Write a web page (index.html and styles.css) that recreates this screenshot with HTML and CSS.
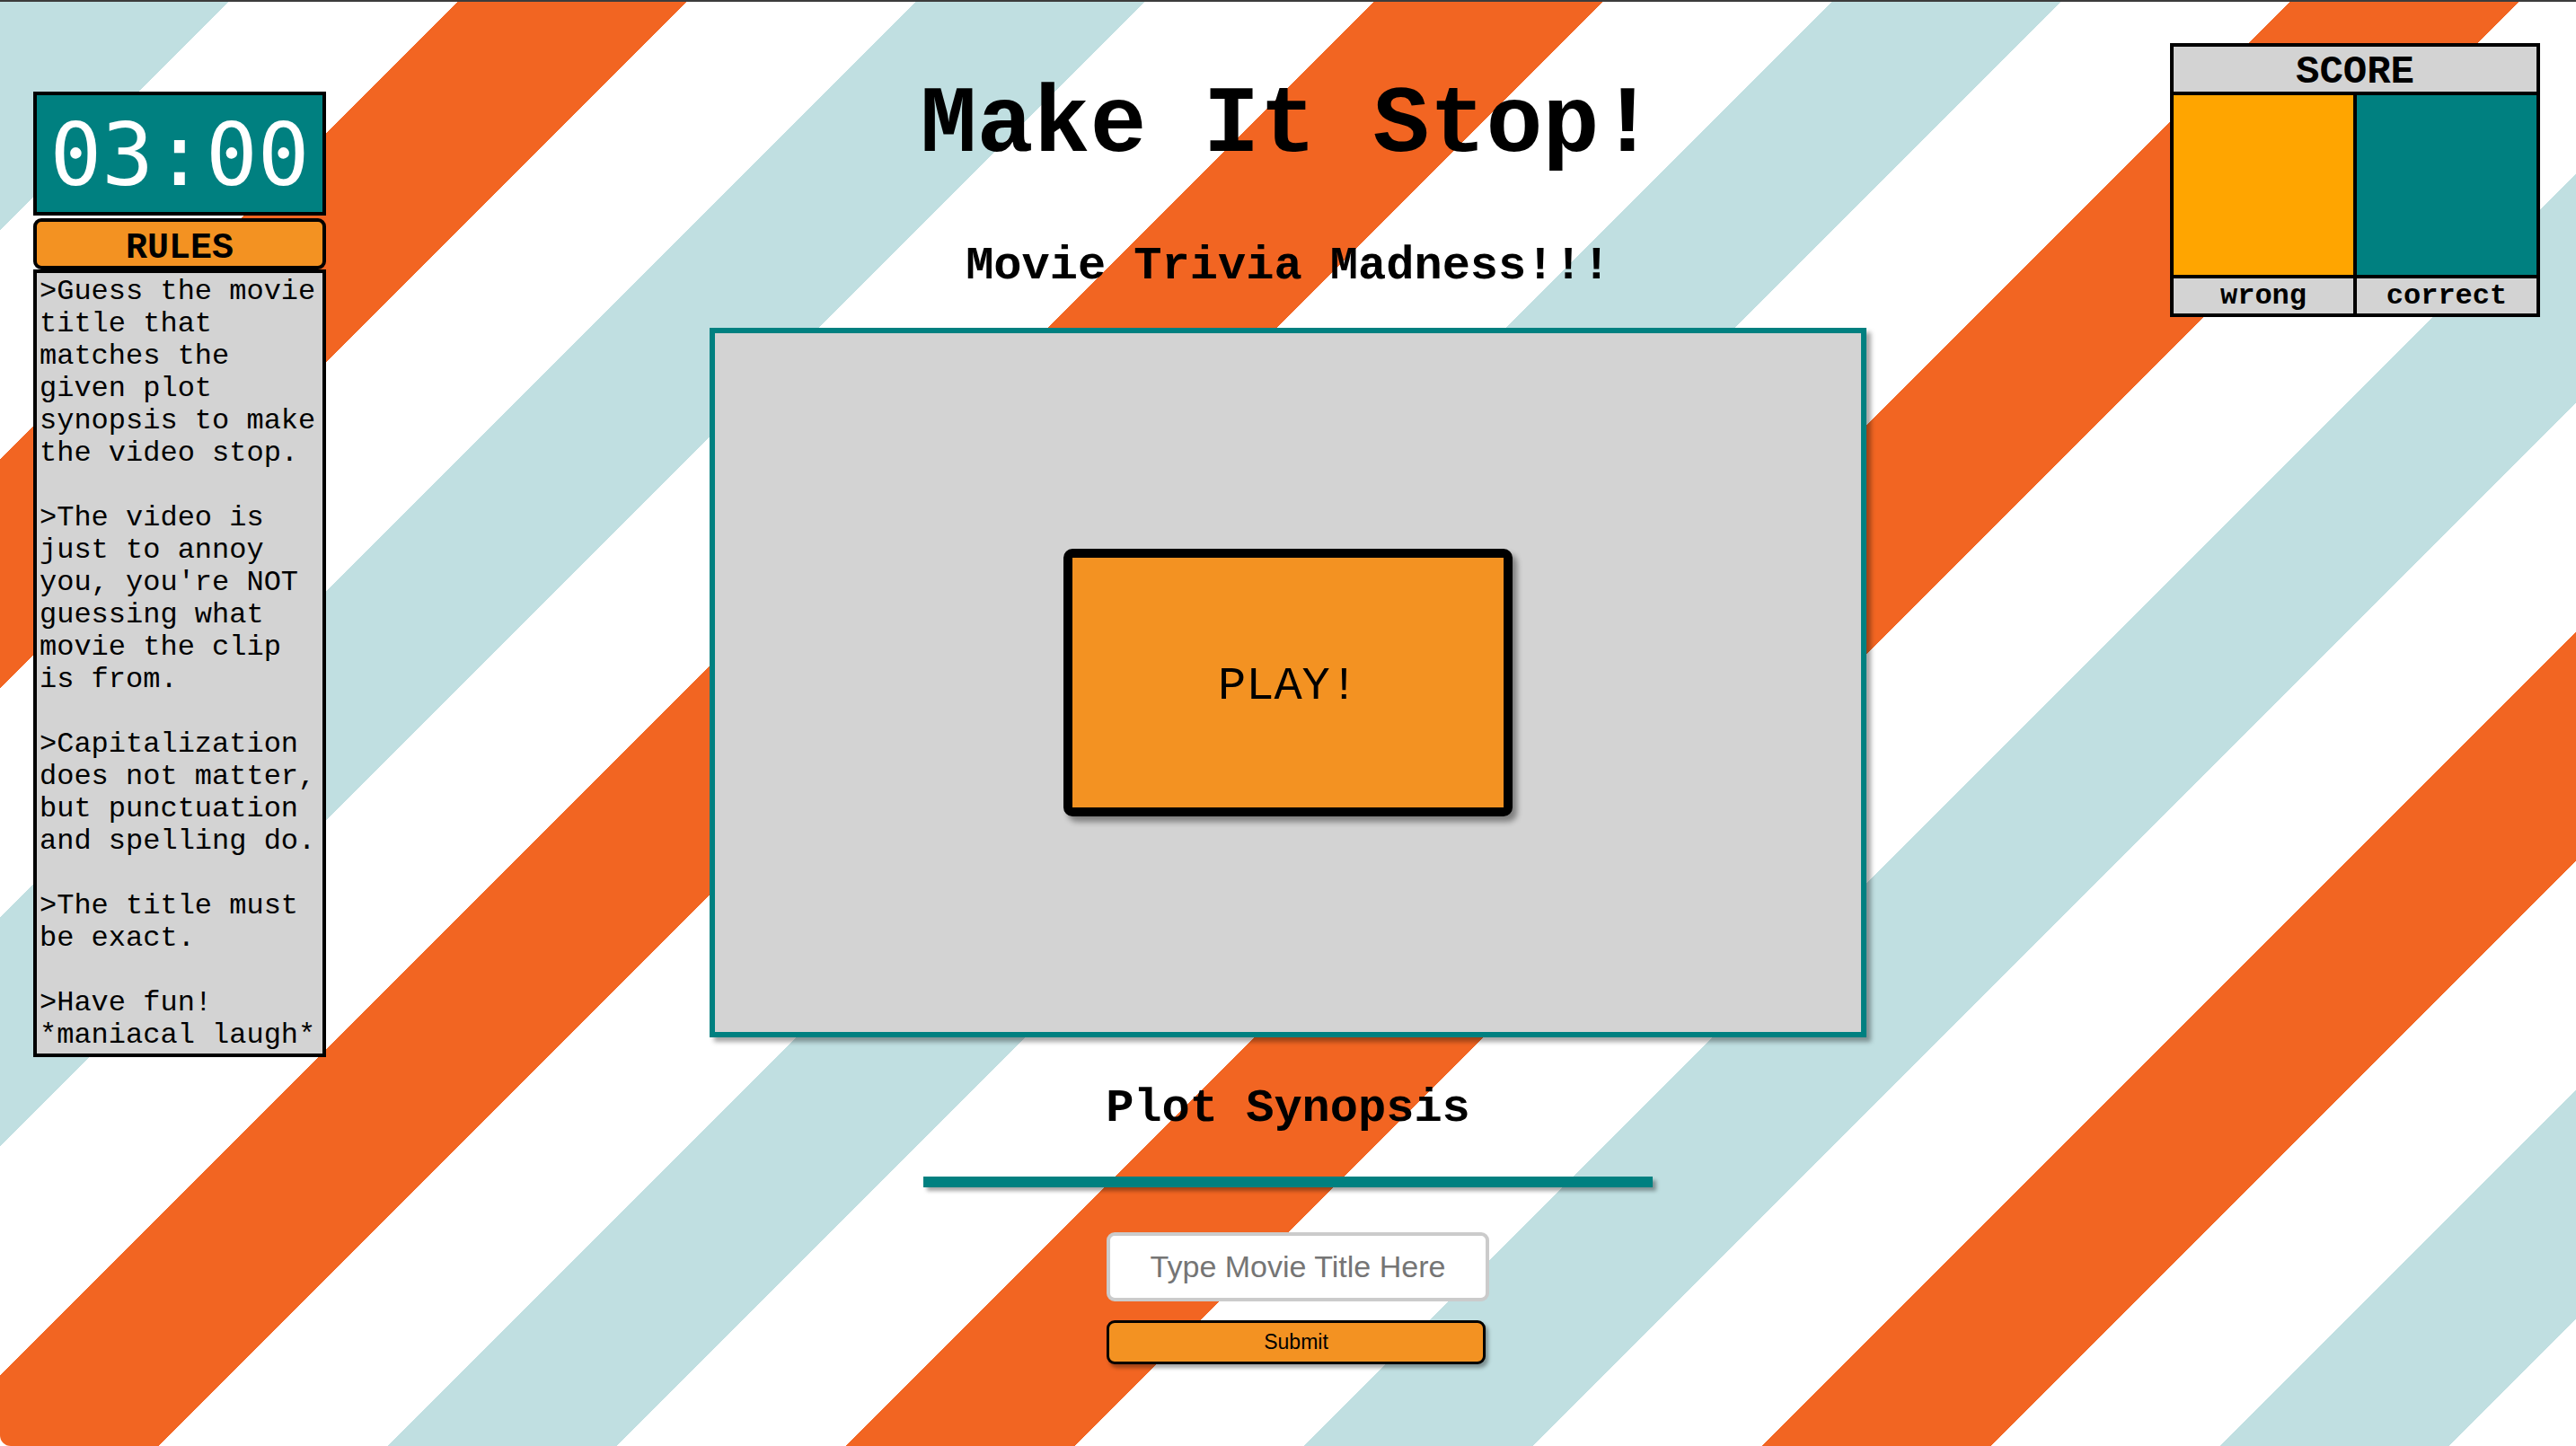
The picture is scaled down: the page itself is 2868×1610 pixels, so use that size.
FILE: index.html
```html
<!DOCTYPE html>
<html lang="en">
<head>
<meta charset="utf-8">
<title>Make It Stop!</title>
<link rel="stylesheet" href="styles.css">
</head>
<body>
<div class="page">
  <aside class="sidebar">
    <div class="timer">03:00</div>
    <div class="rules-head">RULES</div>
    <div class="rules-body">
      <p>&gt;Guess the movie title that matches the given plot synopsis to make the video stop.</p>
      <p>&gt;The video is just to annoy you, you're NOT guessing what movie the clip is from.</p>
      <p>&gt;Capitalization does not matter, but punctuation and spelling do.</p>
      <p>&gt;The title must be exact.</p>
      <p>&gt;Have fun! *maniacal laugh*</p>
    </div>
  </aside>

  <main class="main">
    <h1 class="title">Make It Stop!</h1>
    <h2 class="subtitle">Movie Trivia Madness!!!</h2>
    <div class="stage">
      <button class="play" type="button">PLAY!</button>
    </div>
    <h2 class="synopsis-title">Plot Synopsis</h2>
    <div class="synopsis"></div>
    <input class="answer" type="text" placeholder="Type Movie Title Here">
    <button class="submit" type="button">Submit</button>
  </main>

  <section class="score">
    <div class="score-head">SCORE</div>
    <div class="cell wrong"></div>
    <div class="cell correct"></div>
    <div class="label">wrong</div>
    <div class="label">correct</div>
  </section>
</div>
</body>
</html>
```

FILE: styles.css
```css
html {
  background: #ffffff;
}

body {
  margin: 0;
}

.page {
  box-sizing: border-box;
  min-height: 100vh;
  border-top: 2px solid #3c3c3c;
  border-radius: 0 0 12px 12px;
  background: repeating-linear-gradient(135deg,
    #c0dfe1 0px, #c0dfe1 180.3px,
    #ffffff 180.3px, #ffffff 360.6px,
    #f26522 360.6px, #f26522 540.9px,
    #ffffff 540.9px, #ffffff 721.2px);
  display: grid;
  grid-template-columns: 1fr auto 1fr;
  align-items: start;
  font-family: "Courier New", "Liberation Mono", monospace;
  color: #000;
}

/* ---------- left sidebar ---------- */
.sidebar {
  justify-self: start;
  width: 326px;
  margin: 100px 0 0 37px;
  display: flex;
  flex-direction: column;
}

.timer {
  box-sizing: border-box;
  height: 138px;
  border: 4px solid #000;
  background: #008080;
  color: #ffffff;
  font-family: "DejaVu Sans Mono", "Liberation Mono", monospace;
  font-size: 96px;
  line-height: 125px;
  padding-top: 5px;
  text-align: center;
}

.rules-head {
  box-sizing: border-box;
  height: 57px;
  margin-top: 3px;
  border: 4px solid #000;
  border-radius: 9px;
  background: #f39222;
  font-size: 40px;
  font-weight: bold;
  line-height: 45px;
  padding-top: 7px;
  text-align: center;
}

.rules-body {
  box-sizing: border-box;
  border: 4px solid #000;
  background: #d3d3d3;
  padding: 3px 0 2px 3px;
  font-size: 32px;
  line-height: 36px;
}

.rules-body p {
  margin: 0 0 36px;
}

.rules-body p:last-child {
  margin-bottom: 0;
}

/* ---------- center column ---------- */
.main {
  display: flex;
  flex-direction: column;
  align-items: center;
}

.title {
  margin: 79px 0 0;
  font-size: 105px;
  line-height: 120px;
  font-weight: bold;
}

.subtitle {
  margin: 66px 0 0;
  font-size: 52px;
  line-height: 60px;
  font-weight: bold;
}

.stage {
  box-sizing: border-box;
  width: 1288px;
  height: 790px;
  margin-top: 38px;
  border: 6px solid #008080;
  background: #d3d3d3;
  box-shadow: 5px 5px 5px rgba(0, 0, 0, 0.35);
  display: flex;
  align-items: center;
  justify-content: center;
}

.play {
  box-sizing: border-box;
  width: 500px;
  height: 298px;
  border: 10px solid #000;
  border-radius: 10px;
  background: #f39222;
  box-shadow: 5px 6px 6px rgba(0, 0, 0, 0.4);
  font-family: "Courier New", "Liberation Mono", monospace;
  font-size: 52px;
  color: #000;
  padding: 8px 0 0;
}

.synopsis-title {
  margin: 50px 0 0;
  font-size: 52px;
  line-height: 60px;
  font-weight: bold;
}

.synopsis {
  width: 812px;
  height: 12px;
  margin-top: 45px;
  background: #008080;
  box-shadow: 4px 4px 4px rgba(0, 0, 0, 0.35);
}

.answer {
  box-sizing: border-box;
  width: 426px;
  height: 77px;
  margin: 50px 0 0 22px;
  border: 4px solid #cbcbcb;
  border-radius: 9px;
  background: #ffffff;
  font-family: "Liberation Sans", Arial, sans-serif;
  font-size: 34px;
  text-align: center;
  padding: 0 8px;
  outline: none;
}

.answer::placeholder {
  color: #757575;
}

.submit {
  box-sizing: border-box;
  width: 422px;
  height: 49px;
  margin: 21px 0 0 18px;
  border: 3px solid #000;
  border-radius: 9px;
  background: #f39222;
  box-shadow: 3px 4px 4px rgba(0, 0, 0, 0.35);
  font-family: "Liberation Sans", Arial, sans-serif;
  font-size: 23px;
  color: #000;
  padding: 0;
}

/* ---------- score ---------- */
.score {
  justify-self: end;
  margin: 46px 40px 0 0;
  display: grid;
  grid-template-columns: 200px 200px;
  grid-template-rows: 50px 200px 39px;
  gap: 4px;
  padding: 4px;
  background: #000;
}

.score-head {
  grid-column: 1 / 3;
  background: #d3d3d3;
  font-size: 44px;
  font-weight: bold;
  line-height: 45px;
  padding-top: 6px;
  text-align: center;
}

.cell.wrong {
  background: #ffa500;
}

.cell.correct {
  background: #008080;
}

.label {
  background: #d3d3d3;
  font-size: 32px;
  font-weight: bold;
  line-height: 39px;
  text-align: center;
}
```
